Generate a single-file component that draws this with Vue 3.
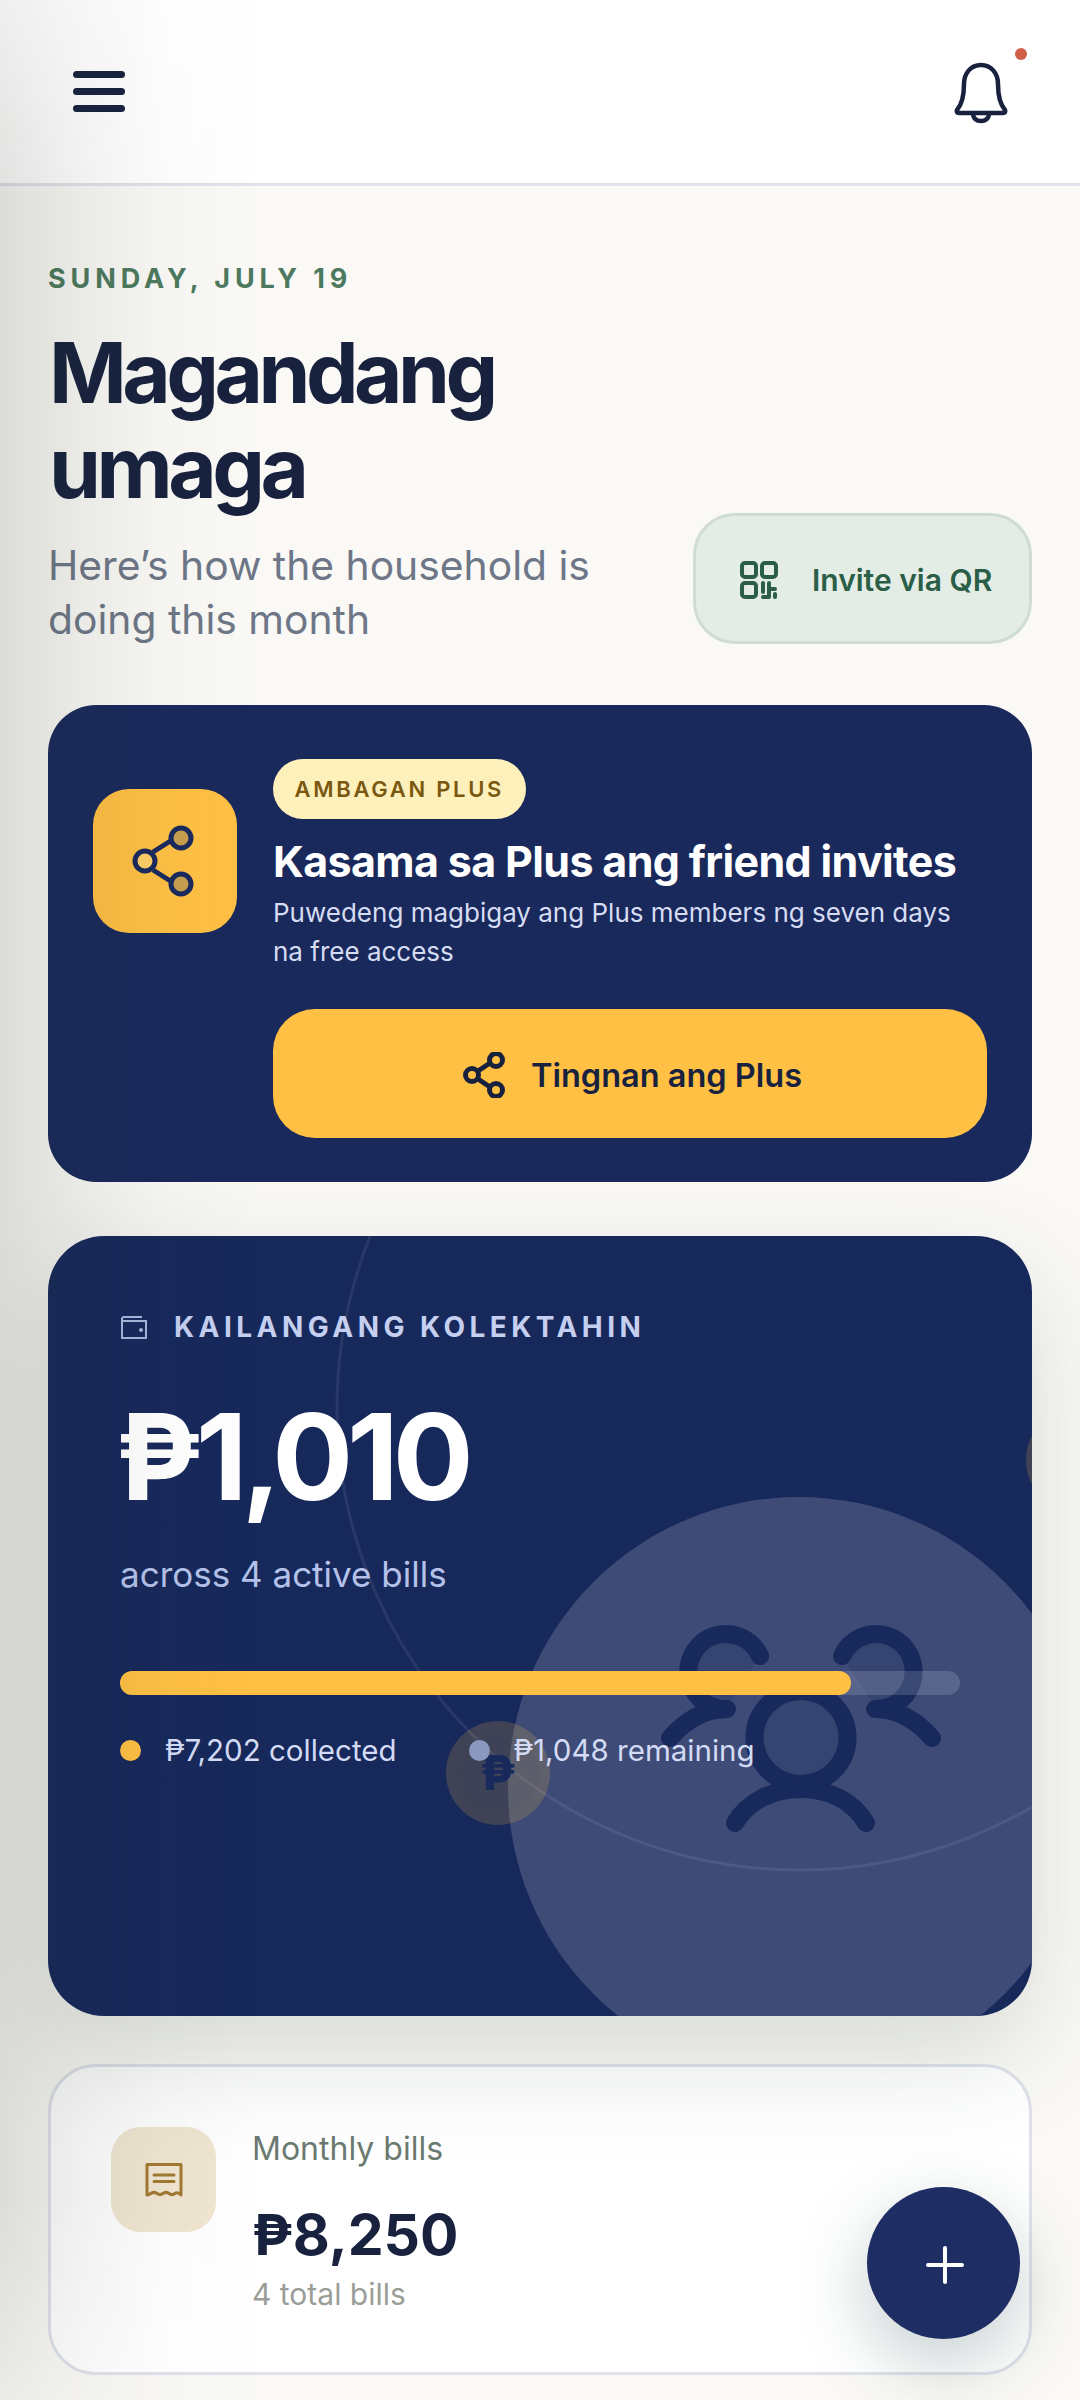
<script setup>
const legend = [
  { label: '₱7,202 collected', tone: 'amber' },
  { label: '₱1,048 remaining', tone: 'slate' },
]
</script>

<template>
  <div class="page">
    <header class="topbar">
      <button class="menu" aria-label="Menu"><span></span><span></span><span></span></button>
      <div class="bell">
        <svg width="60" height="64" viewBox="0 0 60 64" fill="none" stroke="#18223f" stroke-width="4.5" stroke-linejoin="round" stroke-linecap="round">
          <path d="M30 4C20 4 13 12 13 23C13 33 12 42 6 49C5 51 6 52 8 52H52C54 52 55 51 54 49C48 42 47 33 47 23C47 12 40 4 30 4Z" />
          <path d="M22 52C22 58 26 60 30 60C34 60 38 58 38 52" />
        </svg>
        <i class="bell-dot"></i>
      </div>
    </header>

    <main class="content">
      <p class="eyebrow">SUNDAY, JULY 19</p>
      <h1 class="greeting">Magandang<br />umaga</h1>
      <div class="intro">
        <p class="intro-text">Here’s how the household is doing this month</p>
        <button class="invite">
          <svg width="38" height="38" viewBox="0 0 38 38" fill="none" stroke="#2a5e46" stroke-width="4" stroke-linecap="round" stroke-linejoin="round">
            <rect x="2" y="2" width="14" height="14" rx="3" />
            <rect x="22" y="2" width="14" height="14" rx="3" />
            <rect x="2" y="22" width="14" height="14" rx="3" />
            <path d="M23 22V31M29 22V36H23M29 28H35M35 33V36" />
          </svg>
          <span>Invite via QR</span>
        </button>
      </div>

      <section class="promo">
        <div class="promo-tile">
          <svg width="72" height="76" viewBox="0 0 72 76" fill="none" stroke="#1a2a5e" stroke-width="5">
            <path d="M24 29L43 17M24 47L43 59" />
            <circle cx="16" cy="38" r="10" fill="#ffd06a" />
            <circle cx="52" cy="15" r="10" fill="#c9a050" />
            <circle cx="52" cy="61" r="10" fill="#c9a050" />
          </svg>
        </div>
        <div class="promo-body">
          <span class="badge">AMBAGAN PLUS</span>
          <h2 class="promo-title">Kasama sa Plus ang friend invites</h2>
          <p class="promo-text">Puwedeng magbigay ang Plus members ng seven days na free access</p>
          <button class="promo-action">
            <svg width="42" height="46" viewBox="0 0 42 46" fill="none" stroke="#18223f" stroke-width="5">
              <path d="M15 19L27 11M15 27L27 35" />
              <circle cx="9" cy="23" r="6.5" />
              <circle cx="33" cy="8" r="6.5" />
              <circle cx="33" cy="38" r="6.5" />
            </svg>
            <span>Tingnan ang Plus</span>
          </button>
        </div>
      </section>

      <section class="balance">
        <div class="balance-clip">
          <svg class="balance-art" width="984" height="780" viewBox="0 0 984 780" fill="none">
            <circle cx="751" cy="552" r="291" fill="#3e4b77" />
            <circle cx="751" cy="172" r="462" stroke="#fff" stroke-opacity=".08" stroke-width="3" />
            <circle cx="1030" cy="224" r="52" fill="#ffc044" fill-opacity=".18" />
            <circle cx="450" cy="537" r="52" fill="#ffc044" fill-opacity=".18" />
            <circle cx="450" cy="537" r="41" fill="#1a2a5e" fill-opacity=".04" />
            <text x="450" y="554" text-anchor="middle" class="coin-mark">₱</text>
            <g stroke="#18295c" stroke-width="18" stroke-linecap="round">
              <path d="M712 420A37.5 37.5 0 1 0 677.500 473" fill="#18295c" fill-opacity=".2" />
              <path d="M794 420A37.500 37.500 0 1 1 829 473" fill="#18295c" fill-opacity=".2" />
              <path d="M679 473C655 473 637 485 622 502M827 473C851 473 869 485 884 502" />
              <circle cx="753" cy="501.500" r="46.500" fill="#18295c" fill-opacity=".2" />
              <path d="M687 587C700 565 725 553 753 553S805 565 818 587" />
            </g>
          </svg>
        </div>
        <div class="balance-label">
          <svg width="28" height="26" viewBox="0 0 28 26" fill="none" stroke="#a9b6dc" stroke-width="2">
            <path d="M4 3H22M2 7H26V24H2ZM2 7V5C2 4 3 3 4 3" />
            <circle cx="21" cy="16" r="1" fill="#a9b6dc" />
          </svg>
          <span>KAILANGANG KOLEKTAHIN</span>
        </div>
        <div class="balance-amount">₱1,010</div>
        <p class="balance-note">across 4 active bills</p>
        <div class="meter"><div class="meter-fill" :style="{ width: '87%' }"></div></div>
        <ul class="legend">
          <li v-for="item in legend" :key="item.label">
            <i :class="['legend-dot', item.tone]"></i>{{ item.label }}
          </li>
        </ul>
      </section>

      <section class="bills">
        <div class="bills-tile">
          <svg width="40" height="36" viewBox="0 0 40 36" fill="none" stroke="#a27a32" stroke-width="3" stroke-linejoin="round">
            <path d="M3 2.500H37V33C35 31 33 30 31 31.500C29 33 27 33 25 31.500C23 30 21 30 19 31.500C17 33 15 33 13 31.500C11 30 9 30 7 31.500L3 33Z" />
            <path d="M10 13H30M10 19.500H30" stroke-linecap="round" />
          </svg>
        </div>
        <div class="bills-body">
          <p class="bills-name">Monthly bills</p>
          <p class="bills-amount">₱8,250</p>
          <p class="bills-count">4 total bills</p>
        </div>
      </section>
    </main>

    <button class="fab" aria-label="Add">
      <svg width="38" height="38" viewBox="0 0 38 38" stroke="#fff" stroke-linecap="round" stroke-width="4">
        <path d="M2 19H36M19 2V36" />
      </svg>
    </button>
    <div class="edge-shade"></div>
  </div>
</template>

<style>
html, body { margin: 0; background: #faf9f6; }
</style>

<style scoped>
.page {
  position: relative;
  width: 1080px;
  height: 2400px;
  overflow: hidden;
  background: #faf9f6;
  font-family: Inter, "Noto Sans", sans-serif;
  color: #18223f;
}
p, h1, h2, ul { margin: 0; padding: 0; }
button { border: 0; font-family: inherit; cursor: pointer; }

.topbar {
  box-sizing: border-box;
  height: 186px;
  padding: 0 69px 0 73px;
  display: flex;
  align-items: center;
  justify-content: space-between;
  background: #fff;
  border-bottom: 3px solid #e2e2ea;
}
.menu {
  width: 52px;
  padding: 0;
  background: none;
  display: flex;
  flex-direction: column;
  gap: 10px;
}
.menu span { height: 7px; border-radius: 3.5px; background: #18223f; }
.bell { position: relative; width: 60px; height: 64px; margin-top: 2px; }
.bell svg { display: block; }
.bell-dot {
  position: absolute;
  top: -13px;
  right: -16px;
  width: 12px;
  height: 12px;
  border-radius: 50%;
  background: #d0604a;
}

.content { padding: 0 48px; display: flex; flex-direction: column; }
.eyebrow {
  margin-top: 76px;
  font-size: 27px;
  line-height: 34px;
  font-weight: 700;
  letter-spacing: 4.9px;
  color: #4d7a5e;
}
.greeting {
  margin-top: 29px;
  margin-left: 1px;
  font-size: 83.5px;
  line-height: 95px;
  font-weight: 700;
  letter-spacing: -4.5px;
  color: #18223f;
}
.intro { display: flex; align-items: flex-end; justify-content: space-between; margin-top: -2px; }
.intro-text {
  width: 600px;
  font-size: 40.8px;
  line-height: 54px;
  color: #6e7787;
  transform: translateY(2px);
}
.invite {
  box-sizing: border-box;
  width: 339px;
  height: 131px;
  display: flex;
  align-items: center;
  gap: 34px;
  padding: 2px 0 0 44px;
  background: #e4ede5;
  border: 3px solid #cfdcd3;
  border-radius: 42px;
  color: #2a5e46;
  font-size: 30px;
  font-weight: 600;
  white-space: nowrap;
}

.promo {
  box-sizing: border-box;
  height: 477px;
  margin-top: 61px;
  padding: 54px 45px 0;
  display: flex;
  gap: 36px;
  background: #19295c;
  border-radius: 48px;
}
.promo-tile {
  flex: none;
  width: 144px;
  height: 144px;
  margin-top: 30px;
  display: flex;
  align-items: center;
  justify-content: center;
  background: #ffc044;
  border-radius: 36px;
}
.promo-body { flex: 1; min-width: 0; }
.badge {
  display: inline-block;
  height: 60px;
  padding: 0 21.5px;
  border-radius: 30px;
  background: #fef0bb;
  color: #7a5810;
  font-size: 22px;
  line-height: 60px;
  font-weight: 600;
  letter-spacing: 2.7px;
}
.promo-title {
  margin-top: 16px;
  font-size: 43px;
  line-height: 52px;
  font-weight: 700;
  letter-spacing: -.65px;
  color: #fff;
  white-space: nowrap;
}
.promo-text { margin-top: 6px; font-size: 26px; line-height: 39px; color: #d6dcf2; }
.promo-action {
  width: 714px;
  height: 129px;
  margin-top: 38px;
  padding: 3px 0 0 5px;
  display: flex;
  align-items: center;
  justify-content: center;
  gap: 26px;
  background: #ffc044;
  border-radius: 42px;
  color: #18223f;
  font-size: 32.5px;
  font-weight: 600;
}

.balance {
  position: relative;
  z-index: 1;
  box-sizing: border-box;
  height: 780px;
  margin-top: 54px;
  padding: 73px 72px 0;
  background: #17285b;
  border-radius: 56px;
  box-shadow: 0 40px 110px rgba(40, 60, 50, .16);
}
.balance-clip { position: absolute; inset: 0; overflow: hidden; border-radius: 56px; }
.balance-art { display: block; }
.coin-mark { font-size: 48px; font-weight: 800; fill: #18295c; font-family: Inter, sans-serif; }
.balance-label, .balance-amount, .balance-note, .meter, .legend { position: relative; }
.balance-label {
  display: flex;
  align-items: center;
  gap: 26px;
  font-size: 28px;
  line-height: 36px;
  font-weight: 700;
  letter-spacing: 4.45px;
  color: #c5cff0;
}
.balance-amount {
  margin-top: 47px;
  margin-left: -4px;
  font-size: 120px;
  line-height: 130px;
  font-weight: 700;
  letter-spacing: -6px;
  color: #fff;
}
.balance-note { margin-top: 30px; font-size: 35px; line-height: 44px; color: #b4c2ea; }
.meter { width: 840px; height: 24px; margin-top: 75px; border-radius: 12px; background: rgba(255,255,255,.15); }
.meter-fill { height: 100%; border-radius: 12px; background: #ffc044; }
.legend { list-style: none; margin-top: 35px; display: flex; gap: 72px; font-size: 29.5px; line-height: 40px; color: #d3dbf5; }
.legend li { display: flex; align-items: center; }
.legend-dot { width: 21px; height: 21px; margin-right: 24px; border-radius: 50%; }
.amber { background: #ffc044; }
.slate { background: #8a97bf; }

.bills {
  box-sizing: border-box;
  height: 311px;
  margin-top: 48px;
  padding: 60px 60px 0;
  display: flex;
  gap: 36px;
  background: #fff;
  border: 3px solid #dfe2ea;
  border-radius: 48px;
}
.bills-tile {
  flex: none;
  width: 105px;
  height: 105px;
  display: flex;
  align-items: center;
  justify-content: center;
  background: #f0e6d2;
  border-radius: 30px;
}
.bills-name { font-size: 32px; line-height: 44px; color: #6c7a72; }
.bills-amount { margin-top: 28px; font-size: 57px; line-height: 72px; font-weight: 700; color: #18223f; }
.bills-count { margin-top: 3px; font-size: 30px; line-height: 40px; color: #9a9d98; }

.fab {
  position: absolute;
  left: 867px;
  top: 2187px;
  width: 153px;
  height: 152px;
  padding: 4px 0 0 2px;
  display: flex;
  align-items: center;
  justify-content: center;
  border-radius: 50%;
  background: #1e2d64;
  box-shadow: 0 24px 70px rgba(30, 60, 60, .26);
  z-index: 2;
}
.edge-shade {
  position: absolute;
  inset: 0 auto 0 0;
  width: 260px;
  background: linear-gradient(90deg, rgba(40, 50, 35, .14), rgba(40, 50, 35, .075) 30%, rgba(40, 50, 35, .025) 62%, transparent);
  -webkit-mask-image: linear-gradient(180deg, rgba(0,0,0,.55), #000 200px, #000 2200px, rgba(0,0,0,.5));
  mask-image: linear-gradient(180deg, rgba(0,0,0,.55), #000 200px, #000 2200px, rgba(0,0,0,.5));
  pointer-events: none;
  z-index: 3;
}
</style>
